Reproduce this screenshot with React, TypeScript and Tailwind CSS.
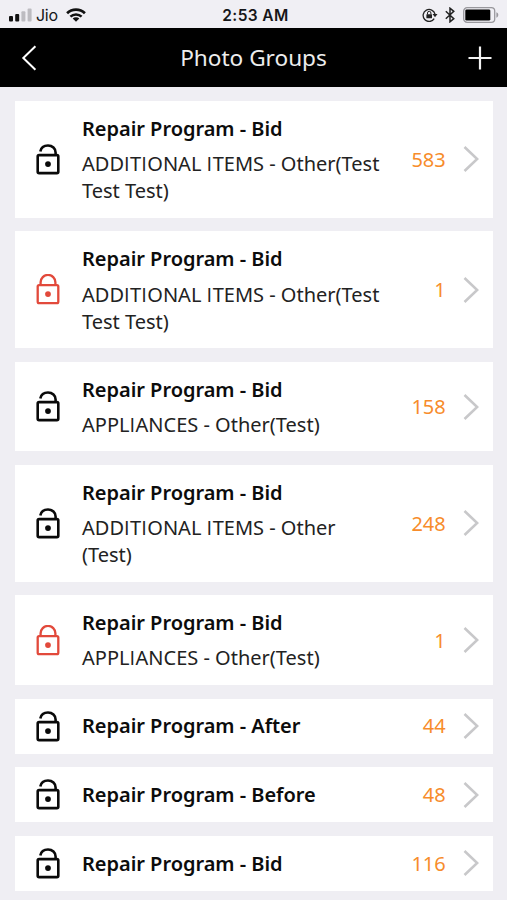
type Group = {
  title: string;
  lines: string[];
  count: number;
  locked?: boolean;
};

const groups: Group[] = [
  { title: "Repair Program - Bid", lines: ["ADDITIONAL ITEMS - Other(Test", "Test Test)"], count: 583 },
  { title: "Repair Program - Bid", lines: ["ADDITIONAL ITEMS - Other(Test", "Test Test)"], count: 1, locked: true },
  { title: "Repair Program - Bid", lines: ["APPLIANCES - Other(Test)"], count: 158 },
  { title: "Repair Program - Bid", lines: ["ADDITIONAL ITEMS - Other", "(Test)"], count: 248 },
  { title: "Repair Program - Bid", lines: ["APPLIANCES - Other(Test)"], count: 1, locked: true },
  { title: "Repair Program - After", lines: [], count: 44 },
  { title: "Repair Program - Before", lines: [], count: 48 },
  { title: "Repair Program - Bid", lines: [], count: 116 },
];

function LockIcon({ locked }: { locked?: boolean }) {
  return (
    <svg
      width="24"
      height="31"
      viewBox="0 0 24 31"
      fill="none"
      stroke={locked ? "#e2493b" : "#0a0a0a"}
      strokeWidth={locked ? 2.3 : 2.6}
      className="-my-2 shrink-0"
    >
      <rect x="1.7" y="11.1" width="20.6" height="18" rx="1.4" />
      {locked ? (
        <path d="M4.6 11V8.3a7.4 7.4 0 0 1 14.8 0V11" />
      ) : (
        <path d="M4.3 7.4C5.1 3.6 8.2 1.5 12 1.5c4.4 0 7.6 3 7.6 7V11" />
      )}
      <circle cx="12" cy="20.1" r="2.9" fill={locked ? "#e2493b" : "#0a0a0a"} stroke="none" />
    </svg>
  );
}

function StatusBar() {
  return (
    <div className="flex h-7 items-center bg-[#f0eff4] pt-[2px] font-['Inter','Liberation_Sans',sans-serif] text-[#161618]">
      <div className="flex flex-1 items-center pl-[9px]">
        <svg width="23" height="14" viewBox="0 0 23 14">
          <rect x="0" y="8" width="4" height="5.5" rx="1" fill="#111" />
          <rect x="6.2" y="6" width="4" height="7.5" rx="1" fill="#111" />
          <rect x="12.4" y="3.3" width="4" height="10.2" rx="1" fill="#bdbcc1" />
          <rect x="18.6" y="0.6" width="4" height="12.9" rx="1" fill="#bdbcc1" />
        </svg>
        <span className="ml-1 w-[22px] text-base leading-4 tracking-[-0.3px]">Jio</span>
        <svg width="20" height="14" viewBox="0 0 20 14" fill="none" stroke="#111" className="ml-[8px]">
          <path d="M1.1 5.2a12.7 12.7 0 0 1 17.8 0" strokeWidth="2.7" />
          <path d="M4.4 8.7a8.1 8.1 0 0 1 11.2 0" strokeWidth="2.5" />
          <path d="M10 13.7 6.7 10.6a4.7 4.7 0 0 1 6.6 0Z" fill="#111" stroke="none" />
        </svg>
      </div>
      <span className="ml-[3px] mt-[1px] text-[15.5px] font-semibold leading-4 tracking-[0.38px]">2:53 AM</span>
      <div className="flex flex-1 items-center justify-end pr-[8px]">
        <svg width="16" height="14" viewBox="0 0 16 14" fill="none" stroke="#222" strokeWidth="1.3">
          <path d="M12.2 10.7a6 6 0 1 1 .8-4.5" />
          <path d="M10.5 6.1h5L13 9.3Z" fill="#222" stroke="none" />
          <rect x="4.4" y="6.2" width="5.6" height="4" rx=".5" fill="#222" stroke="none" />
          <path d="M5.5 6.4V5a1.7 1.7 0 0 1 3.4 0v1.4" strokeWidth="1" />
        </svg>
        <svg width="10" height="16" viewBox="0 0 10 16" fill="none" stroke="#222" strokeWidth="1.5" className="ml-[7px]">
          <path d="m.8 4.2 8 7.4L5 14.8V1.2l3.8 3.2-8 7.4" />
        </svg>
        <svg width="36" height="16" viewBox="0 0 36 16" className="ml-[8px]">
          <rect x=".7" y=".7" width="31" height="14.6" rx="3.4" fill="none" stroke="#99989d" strokeWidth="1.3" />
          <rect x="2.3" y="2.4" width="25" height="11.2" rx="1.4" fill="#000" />
          <path d="M33.4 5.3c2.5.9 2.5 4.5 0 5.4Z" fill="#99989d" />
        </svg>
      </div>
    </div>
  );
}

function Header() {
  return (
    <header className="flex h-[59px] items-center justify-between bg-black pl-[21px] pr-[15px] text-white">
      <svg width="24" height="26" viewBox="0 0 24 26" fill="none" stroke="#fff" strokeWidth="2">
        <path d="M14.4 1.2 2.3 13l12.1 11.8" />
      </svg>
      <h1 className="-ml-[6px] text-[22.6px] leading-[30px] text-[#ededed]">Photo Groups</h1>
      <svg width="24" height="24" viewBox="0 0 24 24" fill="none" stroke="#f2f2f2" strokeWidth="2.2">
        <path d="M.5 12h23M12 .5v23" />
      </svg>
    </header>
  );
}

function PlainCaps({ text }: { text: string }) {
  return (
    <>
      {text.split(/(I)/).map((part, i) =>
        part === "I" ? (
          <span key={i} className="font-['Open_Sans',sans-serif] tracking-[0.5px]">I</span>
        ) : (
          part
        ),
      )}
    </>
  );
}

function GroupCard({ group }: { group: Group }) {
  return (
    <li className="flex items-center bg-white py-[13.9px] pl-[21.5px] pr-[14px]">
      <LockIcon locked={group.locked} />
      <div className="ml-[22px] flex-1 whitespace-nowrap text-xl leading-[27.2px]">
        <h2 className="font-semibold tracking-[-0.03px] text-[#0c0c0c]">{group.title}</h2>
        {group.lines.length > 0 && (
          <p className="-mb-[0.6px] mt-[8px] text-[#222]">
            {group.lines.map((line) => (
              <span key={line} className="block h-[27.2px]">
                <PlainCaps text={line} />
              </span>
            ))}
          </p>
        )}
      </div>
      <span className="text-xl leading-[27.2px] text-[#f78c2b]">{group.count}</span>
      <svg width="16" height="26" viewBox="0 0 16 26" fill="none" stroke="#c8c8ca" strokeWidth="2.6" className="ml-[17.3px] -my-1 shrink-0">
        <path d="M1.5 1 14.2 13 1.5 25" />
      </svg>
    </li>
  );
}

export default function App() {
  return (
    <div className="h-[900px] w-[507px] overflow-hidden bg-[#efeef3] font-['Noto_Sans','Open_Sans',sans-serif]">
      <StatusBar />
      <Header />
      <ul className="flex flex-col gap-[13.6px] pl-[14.5px] pr-[14px] pt-[14.1px]">
        {groups.map((group, i) => (
          <GroupCard key={i} group={group} />
        ))}
      </ul>
    </div>
  );
}
